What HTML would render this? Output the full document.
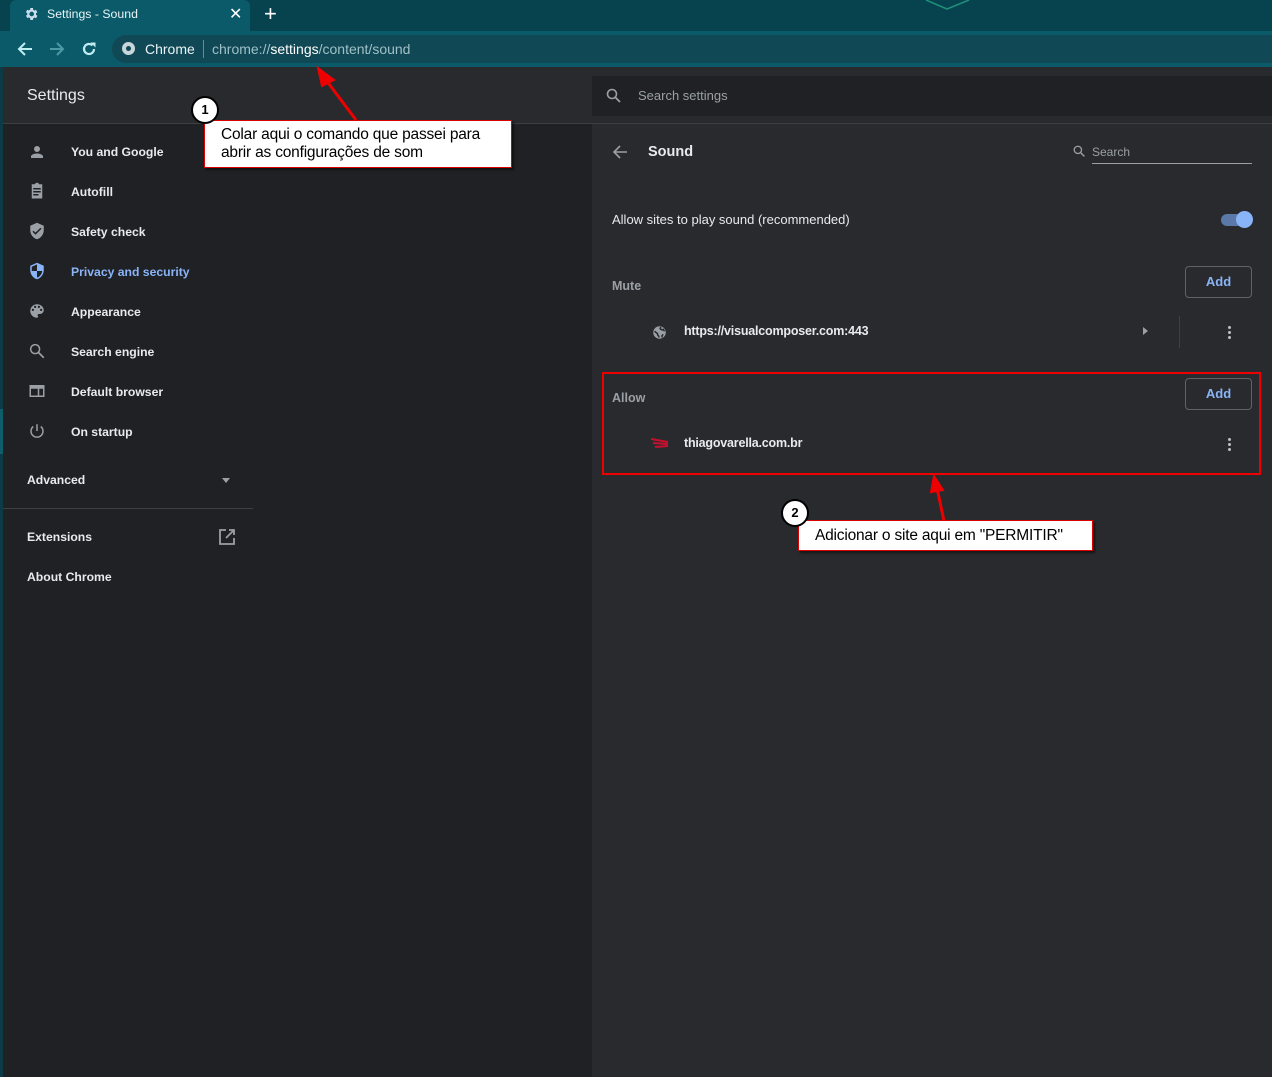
<!DOCTYPE html>
<html><head><meta charset="utf-8"><style>
*{margin:0;padding:0;box-sizing:border-box}
body{width:1272px;height:1077px;overflow:hidden;background:#202124;font-family:"Liberation Sans",sans-serif;position:relative;color:#e8eaed}
.abs{position:absolute}
.nav{position:absolute;left:71px;font-size:12.2px;font-weight:bold;color:#e8eaed}
.ic{position:absolute;left:28px}
.callout{position:absolute;background:#fff;border:1px solid #d00;color:#000;font-size:15.5px;line-height:18px;letter-spacing:-0.2px;white-space:nowrap;box-shadow:2px 2px 2px rgba(0,0,0,.5)}
.num{position:absolute;width:28px;height:28px;border-radius:50%;background:#fff;border:2px solid #000;color:#000;font-weight:bold;font-size:13px;text-align:center;line-height:24px}
.btn{position:absolute;left:1185px;width:67px;height:32px;border:1px solid #5f6368;border-radius:4px;color:#8ab4f8;font-size:13px;font-weight:bold;text-align:center;line-height:30px}
.dots{position:absolute;left:1228px;width:4px}
.dots i{display:block;width:3px;height:3px;border-radius:50%;background:#bdc1c6;margin-bottom:2px}
</style></head><body>
<div class="abs" style="left:0;top:0;width:1272px;height:31px;background:#07424f"></div>
<div class="abs" style="left:10px;top:0;width:240px;height:31px;background:#0b5a69;border-radius:6px 6px 0 0"></div>
<svg class="abs" style="left:23px;top:6px" width="16" height="16" viewBox="0 0 24 24"><path fill="#cde" d="M19.4 13a7.5 7.5 0 000-2l2.1-1.6-2-3.5-2.5 1a7 7 0 00-1.7-1L15 3h-4l-.4 2.7a7 7 0 00-1.7 1l-2.5-1-2 3.5L6.6 11a7.5 7.5 0 000 2l-2.1 1.6 2 3.5 2.5-1a7 7 0 001.7 1L11 21h4l.4-2.7a7 7 0 001.7-1l2.5 1 2-3.5zM13 15.5a3.5 3.5 0 110-7 3.5 3.5 0 010 7z"/></svg>
<div class="abs" style="left:47px;top:7px;font-size:12.3px;color:#e8f4f6">Settings - Sound</div>
<div class="abs" style="left:229px;top:4px;font-size:16px;color:#fff">✕</div>
<div class="abs" style="left:264px;top:1px;font-size:22px;color:#fff">+</div>
<svg class="abs" style="left:925px;top:0" width="45" height="10"><path d="M1 0 L22 9 L44 0" stroke="#1f8f7a" stroke-width="1.5" fill="none"/></svg>
<div class="abs" style="left:0;top:31px;width:1272px;height:36px;background:#0b5a69"></div>
<div class="abs" style="left:112px;top:35px;width:1160px;height:28px;background:#104855;border-radius:14px 0 0 14px"></div>
<svg class="abs" style="left:17px;top:41px" width="16" height="16" viewBox="0 0 16 16"><path d="M15 8H2M8 2L2 8l6 6" stroke="#bfeef2" stroke-width="2" fill="none"/></svg>
<svg class="abs" style="left:49px;top:41px" width="16" height="16" viewBox="0 0 16 16"><path d="M1 8h13M8 2l6 6-6 6" stroke="#4c9aa6" stroke-width="2" fill="none"/></svg>
<svg class="abs" style="left:81px;top:41px" width="16" height="16" viewBox="0 0 16 16"><path d="M13 8a5 5 0 11-1.5-3.6" stroke="#bfeef2" stroke-width="2.2" fill="none"/><path d="M9.5 1.5h5v5z" fill="#bfeef2"/></svg>
<div class="abs" style="left:122px;top:42px;width:13px;height:13px;border-radius:50%;background:#c8d6d9"></div>
<div class="abs" style="left:126px;top:46px;width:5px;height:5px;border-radius:50%;background:#104855"></div>
<div class="abs" style="left:145px;top:41px;font-size:14px;color:#e8f4f6">Chrome</div>
<div class="abs" style="left:203px;top:40px;width:1px;height:18px;background:#6a8d95"></div>
<div class="abs" style="left:212px;top:41px;font-size:14px;color:#9fc0c6">chrome://<span style="color:#fff">settings</span>/content/sound</div>
<div class="abs" style="left:0;top:67px;width:3px;height:1010px;background:#0c3a45"></div>
<div class="abs" style="left:3px;top:67px;width:1269px;height:57px;background:#292a2d;border-bottom:1px solid #3c4043"></div>
<div class="abs" style="left:27px;top:87px;font-size:16px;color:#e8eaed">Settings</div>
<div class="abs" style="left:592px;top:76px;width:680px;height:40px;background:#202124"></div>
<svg class="abs" style="left:606px;top:88px" width="16" height="16" viewBox="0 0 16 16"><circle cx="6" cy="6" r="4.5" stroke="#9aa0a6" stroke-width="1.6" fill="none"/><path d="M9.5 9.5L14 14" stroke="#9aa0a6" stroke-width="1.8"/></svg>
<div class="abs" style="left:638px;top:88px;font-size:13px;color:#9aa0a6">Search settings</div>
<div class="abs" style="left:0;top:409px;width:3px;height:45px;background:#0e5d6b"></div>
<svg class="ic" style="top:143px" width="18" height="18" viewBox="0 0 24 24"><path fill="#9aa0a6" d="M12 12a4 4 0 100-8 4 4 0 000 8zm0 2c-2.7 0-8 1.3-8 4v2h16v-2c0-2.7-5.3-4-8-4z"/></svg>
<div class="nav" style="top:145px">You and Google</div>
<svg class="ic" style="top:182px" width="18" height="18" viewBox="0 0 24 24"><path fill="#9aa0a6" d="M19 3h-4.2A3 3 0 009.2 3H5v19h14zM7 8h10v2H7zm0 4h10v2H7zm0 4h7v2H7z"/></svg>
<div class="nav" style="top:185px">Autofill</div>
<svg class="ic" style="top:222px" width="18" height="18" viewBox="0 0 24 24"><path fill="#9aa0a6" d="M12 1L3 5v6c0 5.5 3.8 10.7 9 12 5.2-1.3 9-6.5 9-12V5zm-2 16l-4-4 1.4-1.4L10 14.2l6.6-6.6L18 9z"/></svg>
<div class="nav" style="top:225px">Safety check</div>
<svg class="ic" style="top:262px" width="18" height="18" viewBox="0 0 24 24"><path fill="#8ab4f8" d="M12 1L3 5v6c0 5.5 3.8 10.7 9 12 5.2-1.3 9-6.5 9-12V5zm0 11H5V6.3l7-3.1zm0 0h7c-.5 4.1-3.3 7.8-7 8.9z"/></svg>
<div class="nav" style="top:265px;color:#8ab4f8">Privacy and security</div>
<svg class="ic" style="top:302px" width="18" height="18" viewBox="0 0 24 24"><path fill="#9aa0a6" d="M12 3a9 9 0 000 18c.8 0 1.5-.7 1.5-1.5 0-.4-.1-.7-.4-1-.2-.3-.4-.6-.4-1 0-.8.7-1.5 1.5-1.5H16a5 5 0 005-5c0-4.4-4-8-9-8zM6.5 12a1.5 1.5 0 110-3 1.5 1.5 0 010 3zm3-4a1.5 1.5 0 110-3 1.5 1.5 0 010 3zm5 0a1.5 1.5 0 110-3 1.5 1.5 0 010 3zm3 4a1.5 1.5 0 110-3 1.5 1.5 0 010 3z"/></svg>
<div class="nav" style="top:305px">Appearance</div>
<svg class="ic" style="top:342px" width="18" height="18" viewBox="0 0 24 24"><circle cx="9.5" cy="9.5" r="6" stroke="#9aa0a6" stroke-width="2" fill="none"/><path d="M14 14l7 7" stroke="#9aa0a6" stroke-width="2.2"/></svg>
<div class="nav" style="top:345px">Search engine</div>
<svg class="ic" style="top:382px" width="18" height="18" viewBox="0 0 24 24"><path fill="#9aa0a6" d="M2 4h20v16H2zm2 5v9h9V9zm11 0v9h5V9z"/></svg>
<div class="nav" style="top:385px">Default browser</div>
<svg class="ic" style="top:422px" width="18" height="18" viewBox="0 0 24 24"><path d="M12 3v9M7 6a8 8 0 1010 0" stroke="#9aa0a6" stroke-width="2" fill="none"/></svg>
<div class="nav" style="top:425px">On startup</div>
<div class="nav" style="left:27px;top:473px">Advanced</div>
<div class="abs" style="left:222px;top:478px;border:4px solid transparent;border-top:5px solid #9aa0a6"></div>
<div class="abs" style="left:3px;top:508px;width:250px;height:1px;background:#3c4043"></div>
<div class="nav" style="left:27px;top:530px">Extensions</div>
<svg class="abs" style="left:218px;top:528px" width="18" height="18" viewBox="0 0 18 18"><path d="M8 2H2v14h14v-6M11 2h5v5M16 2L8 10" stroke="#9aa0a6" stroke-width="1.8" fill="none"/></svg>
<div class="nav" style="left:27px;top:570px">About Chrome</div>
<div class="abs" style="left:592px;top:124px;width:680px;height:953px;background:#292a2d"></div>
<svg class="abs" style="left:612px;top:144px" width="16" height="16" viewBox="0 0 16 16"><path d="M15 8H2M8 2L2 8l6 6" stroke="#9aa0a6" stroke-width="1.6" fill="none"/></svg>
<div class="abs" style="left:648px;top:144px;font-size:14.5px;font-weight:bold">Sound</div>
<svg class="abs" style="left:1073px;top:145px" width="13" height="13" viewBox="0 0 16 16"><circle cx="6" cy="6" r="4.5" stroke="#9aa0a6" stroke-width="1.6" fill="none"/><path d="M9.5 9.5L14 14" stroke="#9aa0a6" stroke-width="1.8"/></svg>
<div class="abs" style="left:1092px;top:145px;font-size:12px;color:#9aa0a6">Search</div>
<div class="abs" style="left:1092px;top:163px;width:160px;height:1px;background:#9aa0a6"></div>
<div class="abs" style="left:612px;top:212px;font-size:13px">Allow sites to play sound (recommended)</div>
<div class="abs" style="left:1221px;top:214px;width:28px;height:12px;border-radius:6px;background:#5b79a8"></div>
<div class="abs" style="left:1236px;top:211px;width:17px;height:17px;border-radius:50%;background:#8ab4f8"></div>
<div class="abs" style="left:612px;top:279px;font-size:12.5px;font-weight:bold;color:#9aa0a6">Mute</div>
<div class="btn" style="top:266px">Add</div>
<svg class="abs" style="left:652px;top:325px" width="15" height="15" viewBox="0 0 24 24"><circle cx="12" cy="12" r="10" fill="#9aa0a6"/><path d="M11 20v-2l-2-2v-2l-5-4M14 3l-1 3 3 2 2-1 2 3M16 20v-3l2-2" stroke="#292a2d" stroke-width="2.4" fill="none"/></svg>
<div class="abs" style="left:684px;top:324px;font-size:12.5px;font-weight:bold;letter-spacing:-0.2px">https://visualcomposer.com:443</div>
<div class="abs" style="left:1143px;top:327px;border:4px solid transparent;border-left:5px solid #9aa0a6;border-right:0"></div>
<div class="abs" style="left:1179px;top:316px;width:1px;height:32px;background:#3c4043"></div>
<div class="dots" style="top:326px"><i></i><i></i><i></i></div>
<div class="abs" style="left:602px;top:372px;width:659px;height:103px;border:2px solid #e00"></div>
<div class="abs" style="left:612px;top:391px;font-size:12.5px;font-weight:bold;color:#9aa0a6">Allow</div>
<div class="btn" style="top:378px">Add</div>
<svg class="abs" style="left:651px;top:438px" width="18" height="10"><path d="M0 1L17 4M2 5L17 6M4 9L17 8" stroke="#c8102e" stroke-width="2"/></svg>
<div class="abs" style="left:684px;top:436px;font-size:12.5px;font-weight:bold;letter-spacing:-0.2px">thiagovarella.com.br</div>
<div class="dots" style="top:438px"><i></i><i></i><i></i></div>
<svg class="abs" style="left:0;top:0" width="1272" height="1077"><path d="M356 120 L326 80" stroke="#e00" stroke-width="3"/><path d="M318 68 L334 80 L322 86 Z" fill="#e00" stroke="#e00" stroke-width="2"/>
<path d="M944 521 L937 488" stroke="#e00" stroke-width="3"/><path d="M934 476 L943 490 L931 492 Z" fill="#e00" stroke="#e00" stroke-width="2"/></svg>
<div class="callout" style="left:204px;top:120px;width:308px;height:48px;padding:5px 16px">Colar aqui o comando que passei para<br>abrir as configurações de som</div>
<div class="num" style="left:191px;top:96px">1</div>
<div class="callout" style="left:798px;top:520px;width:295px;height:31px;padding:6px 16px">Adicionar o site aqui em "PERMITIR"</div>
<div class="num" style="left:781px;top:499px">2</div>
</body></html>
